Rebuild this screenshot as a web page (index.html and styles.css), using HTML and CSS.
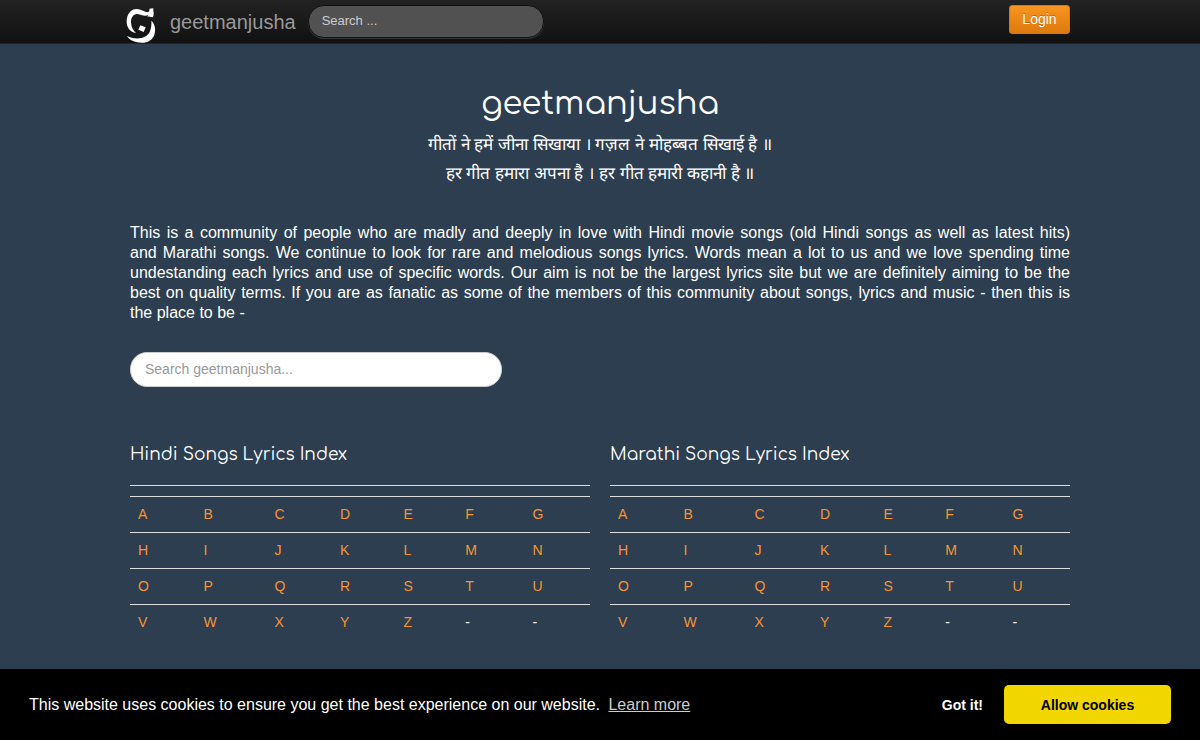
FILE: index.html
```html
<!DOCTYPE html>
<html lang="en">
<head>
<meta charset="utf-8">
<meta name="viewport" content="width=device-width, initial-scale=1">
<title>geetmanjusha</title>
<link rel="stylesheet" href="styles.css">
</head>
<body>
<header class="navbar">
  <div class="container navbar-inner">
    <a class="brand" href="#">
      <svg class="logo" viewBox="48 26 90 105" aria-hidden="true">
        <path d="M118 28L130 27C129 36 134 46 128 54L111 51C113 49 115 48 115 46C103 55 92 43 79 44C68 46 62 58 63 70C64 84 70 93 78 101C60 98 50 84 50 67C50 45 61 30 80 29C94 29 103 39 113 38C119 37 119 33 118 28Z"/>
        <path d="M91 78L107 84L101 98L85 91Z"/>
        <path d="M124 64C135 74 138 91 133 106C127 122 113 130 96 130C76 130 60 124 51 110C64 117 80 119 94 116C109 113 119 103 122 89C124 80 125 72 124 64Z"/>
      </svg>
      <span>geetmanjusha</span>
    </a>
    <form class="nav-search">
      <input type="search" aria-label="Search" placeholder="Search ...">
    </form>
    <button class="login" type="button">Login</button>
  </div>
</header>

<main class="container">
  <div class="hero">
    <h1>geetmanjusha</h1>
    <p lang="hi">गीतों ने हमें जीना सिखाया । गज़ल ने मोहब्बत सिखाई है ॥<br>हर गीत हमारा अपना है । हर गीत हमारी कहानी है ॥</p>
  </div>
  <p class="intro">This is a community of people who are madly and deeply in love with Hindi movie songs (old Hindi songs as well as latest hits) and&nbsp;Marathi songs. We continue to look for rare and melodious songs lyrics. Words mean a lot to us and we love spending time undestanding each lyrics and use of specific words. Our aim is not be the largest lyrics site but we are definitely aiming to be the best on quality terms. If you are as fanatic as some of the members of this community about songs, lyrics and music - then this is the&nbsp;place to be -</p>
  <form class="main-search">
    <input type="search" aria-label="Search geetmanjusha" placeholder="Search geetmanjusha...">
  </form>
  <div class="indexes">
    <section>
      <h2>Hindi Songs Lyrics Index</h2>
      <table>
        <tbody>
          <tr><td><a href="#">A</a></td><td><a href="#">B</a></td><td><a href="#">C</a></td><td><a href="#">D</a></td><td><a href="#">E</a></td><td><a href="#">F</a></td><td><a href="#">G</a></td></tr>
          <tr><td><a href="#">H</a></td><td><a href="#">I</a></td><td><a href="#">J</a></td><td><a href="#">K</a></td><td><a href="#">L</a></td><td><a href="#">M</a></td><td><a href="#">N</a></td></tr>
          <tr><td><a href="#">O</a></td><td><a href="#">P</a></td><td><a href="#">Q</a></td><td><a href="#">R</a></td><td><a href="#">S</a></td><td><a href="#">T</a></td><td><a href="#">U</a></td></tr>
          <tr><td><a href="#">V</a></td><td><a href="#">W</a></td><td><a href="#">X</a></td><td><a href="#">Y</a></td><td><a href="#">Z</a></td><td>-</td><td>-</td></tr>
        </tbody>
      </table>
    </section>
    <section>
      <h2>Marathi Songs Lyrics Index</h2>
      <table>
        <tbody>
          <tr><td><a href="#">A</a></td><td><a href="#">B</a></td><td><a href="#">C</a></td><td><a href="#">D</a></td><td><a href="#">E</a></td><td><a href="#">F</a></td><td><a href="#">G</a></td></tr>
          <tr><td><a href="#">H</a></td><td><a href="#">I</a></td><td><a href="#">J</a></td><td><a href="#">K</a></td><td><a href="#">L</a></td><td><a href="#">M</a></td><td><a href="#">N</a></td></tr>
          <tr><td><a href="#">O</a></td><td><a href="#">P</a></td><td><a href="#">Q</a></td><td><a href="#">R</a></td><td><a href="#">S</a></td><td><a href="#">T</a></td><td><a href="#">U</a></td></tr>
          <tr><td><a href="#">V</a></td><td><a href="#">W</a></td><td><a href="#">X</a></td><td><a href="#">Y</a></td><td><a href="#">Z</a></td><td>-</td><td>-</td></tr>
        </tbody>
      </table>
    </section>
  </div>
</main>

<aside class="cookies" aria-label="Cookie consent">
  <p>This website uses cookies to ensure you get the best experience on our website. <a href="#">Learn more</a></p>
  <button class="dismiss" type="button">Got it!</button>
  <button class="allow" type="button">Allow cookies</button>
</aside>
</body>
</html>
```
FILE: styles.css
```css
* { box-sizing: border-box; }

body {
  margin: 0;
  min-height: 100vh;
  display: flex;
  flex-direction: column;
  background: #2c3e50;
  color: #fff;
  font: 14px/20px "Liberation Sans", Arial, sans-serif;
}

button, input { font: inherit; }

.container {
  width: 100%;
  max-width: 980px;
  margin: 0 auto;
  padding: 0 20px;
}

.navbar {
  background: linear-gradient(#222, #111);
  border-bottom: 1px solid #252525;
}

.navbar-inner {
  display: flex;
  align-items: center;
  min-height: 43px;
}

.brand {
  display: flex;
  align-items: center;
  gap: 14px;
  margin-left: -4px;
  color: #999;
  font-size: 20px;
  text-decoration: none;
}

.logo {
  width: 30px;
  height: 35px;
  margin-top: 8px;
  fill: #fff;
}

.nav-search { margin-left: 12px; }

.nav-search input {
  display: block;
  width: 236px;
  height: 33px;
  padding: 0 13px 2px;
  border: 1px solid #111;
  border-radius: 16px;
  background: #515151;
  box-shadow: 0 1px 0 #333;
  color: #fff;
  font-size: 13px;
}

.nav-search input::placeholder { color: #ccc; opacity: 1; }

.login {
  min-width: 61px;
  height: 29px;
  margin: 0 0 4px auto;
  padding: 0 12px 1px;
  border: 1px solid #d9780f;
  border-radius: 3px;
  background: linear-gradient(#f89420, #dd7a0c);
  color: #fff;
  text-shadow: 0 -1px 0 rgba(0, 0, 0, .25);
}

.hero { padding-top: 38px; text-align: center; }

h1, h2 {
  margin: 0;
  font-family: Comfortaa, Quicksand, Lato, sans-serif;
  font-weight: 400;
}

h1 { font-size: 32px; line-height: 44px; }

.hero p {
  margin: 4px 0 0;
  font-size: 17px;
  line-height: 29px;
}

.intro {
  margin: 35px 0 0;
  font-size: 16px;
  text-align: justify;
}

.main-search { margin-top: 29px; }

.main-search input {
  display: block;
  width: 100%;
  max-width: 372px;
  height: 35px;
  padding: 0 14px 1px;
  border: 1px solid #ccc;
  border-radius: 17px;
  background: #fff;
  color: #555;
}

.main-search input::placeholder { color: #999; opacity: 1; }

.indexes {
  display: grid;
  grid-template-columns: repeat(auto-fit, minmax(280px, 1fr));
  gap: 20px;
  margin-top: 58px;
  padding-bottom: 20px;
}

h2 {
  padding-bottom: 20px;
  border-bottom: 1px solid #ddd;
  font-size: 17px;
  line-height: 20px;
}

table {
  width: 100%;
  margin-top: 10px;
  border-collapse: collapse;
}

td {
  padding: 8px;
  border-top: 1px solid #ddd;
  line-height: 19px;
}

td a { color: #f89432; text-decoration: none; }

.cookies {
  display: flex;
  align-items: center;
  margin-top: auto;
  padding: 16px 29px;
  background: #000;
  font-size: 16px;
}

.cookies p { flex: 1; margin: 0; }

.cookies p a { margin-left: 4px; color: #ccc; }

.cookies button {
  height: 39px;
  border: 0;
  border-radius: 5px;
  font-size: 14px;
  font-weight: 700;
}

.dismiss { padding: 0 21px; background: none; color: #fff; }

.allow { min-width: 167px; background: #f1d600; color: #000; }
```
